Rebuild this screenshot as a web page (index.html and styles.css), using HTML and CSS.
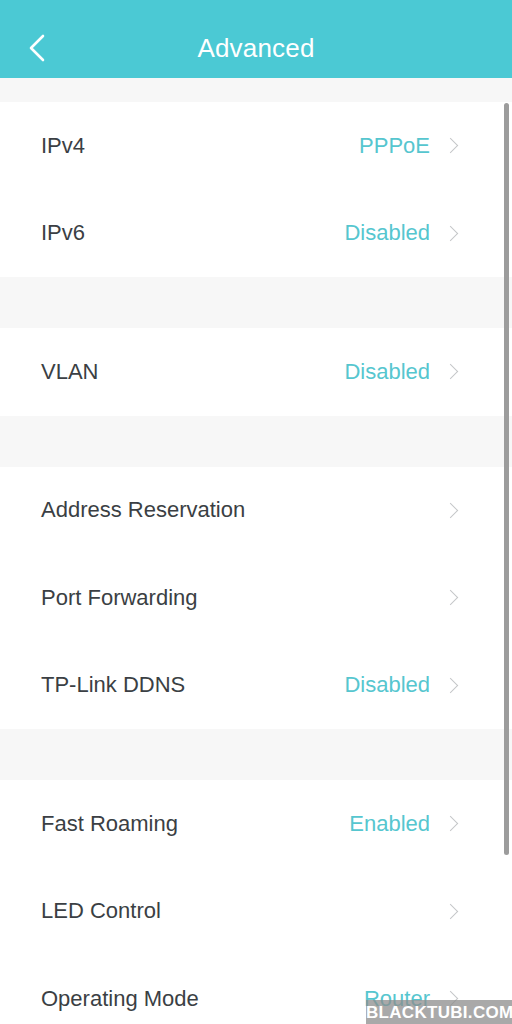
FILE: index.html
```html
<!DOCTYPE html>
<html lang="en">
<head>
  <meta charset="UTF-8">
  <meta name="viewport" content="width=device-width, initial-scale=1.0">
  <title>Advanced</title>
  <link rel="stylesheet" href="styles.css">
</head>
<body>

<header class="topbar">
  <svg class="back" width="18" height="28" viewBox="0 0 18 28"><path d="M15 2 L3 14 L15 26" fill="none" stroke="#fff" stroke-width="2.6" stroke-linecap="round" stroke-linejoin="round"/></svg>
  <h1>Advanced</h1>
</header>

<main class="content">
  <ul class="group">
    <li class="row"><span class="label">IPv4</span><span class="value">PPPoE</span><span class="chev"></span></li>
    <li class="row"><span class="label">IPv6</span><span class="value">Disabled</span><span class="chev"></span></li>
  </ul>

  <ul class="group">
    <li class="row"><span class="label">VLAN</span><span class="value">Disabled</span><span class="chev"></span></li>
  </ul>

  <ul class="group">
    <li class="row"><span class="label">Address Reservation</span><span class="value"></span><span class="chev"></span></li>
    <li class="row"><span class="label">Port Forwarding</span><span class="value"></span><span class="chev"></span></li>
    <li class="row"><span class="label">TP-Link DDNS</span><span class="value">Disabled</span><span class="chev"></span></li>
  </ul>

  <ul class="group">
    <li class="row"><span class="label">Fast Roaming</span><span class="value">Enabled</span><span class="chev"></span></li>
    <li class="row"><span class="label">LED Control</span><span class="value"></span><span class="chev"></span></li>
    <li class="row"><span class="label">Operating Mode</span><span class="value">Router</span><span class="chev"></span></li>
  </ul>

  <div class="scrollbar"></div>
</main>

<div class="watermark">BLACKTUBI.COM</div>

</body>
</html>
```

FILE: styles.css
```css
html, body {
  overflow: hidden;
}
body {
  margin: 0;
  padding: 0;
  font-family: "Liberation Sans", Arial, sans-serif;
  background-color: #f7f7f7;
  height: 1024px;
  position: relative;
}
.topbar {
  height: 78px;
  box-sizing: border-box;
  padding-top: 18px;
  background-color: #4bc9d4;
  display: flex;
  align-items: center;
  justify-content: center;
  position: relative;
}
.topbar h1 {
  margin: 0;
  color: #fff;
  font-weight: normal;
  font-size: 26px;
  letter-spacing: 0.2px;
}
.back {
  position: absolute;
  left: 28px;
  top: 34px;
}
.content {
  position: relative;
  padding-top: 24px;
  height: 946px;
  box-sizing: border-box;
  overflow: hidden;
}
.group {
  list-style: none;
  margin: 0 0 51px 0;
  padding: 0;
  background-color: #fff;
}
.row {
  height: 87.5px;
  display: flex;
  align-items: center;
  padding: 0 0 0 41px;
}
.label {
  flex: 1;
  font-size: 22px;
  color: #3b3f44;
}
.value {
  font-size: 22px;
  color: #56c6cf;
  margin-right: 15px;
}
.chev {
  width: 10px;
  height: 10px;
  border-top: 1.5px solid #c4c6c8;
  border-right: 1.5px solid #c4c6c8;
  transform: rotate(45deg);
  margin-right: 56px;
}
.scrollbar {
  position: absolute;
  right: 3px;
  top: 25px;
  width: 5px;
  height: 752px;
  border-radius: 3px;
  background-color: #9c9c9c;
}
.watermark {
  position: absolute;
  left: 366px;
  top: 1000px;
  width: 146px;
  height: 24px;
  background-color: rgba(140, 140, 140, 0.75);
  color: #fff;
  font-family: "Liberation Sans", Arial, sans-serif;
  font-weight: bold;
  font-size: 17px;
  line-height: 26px;
  text-align: center;
  letter-spacing: 0.3px;
}
```
